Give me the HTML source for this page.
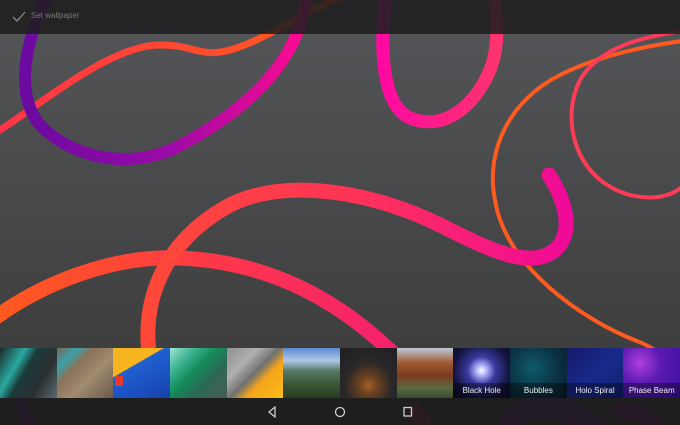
<!DOCTYPE html>
<html><head><meta charset="utf-8"><style>
html,body{margin:0;padding:0;width:680px;height:425px;overflow:hidden;background:#444;font-family:"Liberation Sans",sans-serif}
#bg{position:absolute;left:0;top:0}
.top{position:absolute;left:0;top:0;width:680px;height:34px;background:rgba(30,30,31,0.88)}
.top span{position:absolute;left:31px;top:11px;font-size:8px;color:#777}
.nav{position:absolute;left:0;top:398px;width:680px;height:27px;background:rgba(28,28,28,0.9)}
.strip{position:absolute;left:0;top:348px;width:680px;height:50px;display:flex}
.t{flex:1;height:50px;position:relative;overflow:hidden}
.t span{position:absolute;bottom:0;left:0;right:0;height:15px;line-height:15px;text-align:center;font-size:8px;color:#eee;background:rgba(0,0,0,0.35)}
</style></head><body>
<svg id="bg" width="680" height="425" viewBox="0 0 680 425">
<defs>
<linearGradient id="g" x1="0" y1="0" x2="0" y2="1"><stop offset="0" stop-color="#555659"/><stop offset="1" stop-color="#393939"/></linearGradient>
<linearGradient id="pur" x1="0" y1="0" x2="1" y2="0"><stop offset="0" stop-color="#6a0aa0"/><stop offset="0.5" stop-color="#9a0aa8"/><stop offset="1" stop-color="#ff0b90"/></linearGradient>
<linearGradient id="or" x1="0" y1="0" x2="1" y2="0"><stop offset="0" stop-color="#ff3448"/><stop offset="1" stop-color="#ff5c1a"/></linearGradient>
<linearGradient id="big" x1="0" y1="0" x2="1" y2="0"><stop offset="0" stop-color="#ff4838"/><stop offset="0.5" stop-color="#ff3358"/><stop offset="1" stop-color="#f00a98"/></linearGradient>
<linearGradient id="b2" x1="0" y1="0" x2="1" y2="0"><stop offset="0" stop-color="#ff5a1e"/><stop offset="0.5" stop-color="#ff3a45"/><stop offset="1" stop-color="#f52070"/></linearGradient>
<linearGradient id="mag" x1="0" y1="0" x2="1" y2="0"><stop offset="0" stop-color="#ff0aa0"/><stop offset="1" stop-color="#ff3370"/></linearGradient>
</defs>
<rect width="680" height="425" fill="url(#g)"/>
<g fill="none" stroke-linecap="round">
<path d="M0,130 C40,105 110,45 160,45 C195,45 200,58 230,50 C260,42 290,20 345,-5" stroke="url(#or)" stroke-width="7"/>
<path d="M48,-5 C25,40 12,100 45,130 C80,160 130,168 175,148 C230,120 300,70 306,-5" stroke="url(#pur)" stroke-width="12"/>
<path d="M386,-5 C380,40 380,105 410,118 C445,132 475,105 490,70 C500,45 497,15 494,-5" stroke="url(#mag)" stroke-width="13"/>
<path d="M690,40 C650,45 600,55 560,75 C510,100 485,150 495,200 C505,265 580,320 642,343 C660,352 675,362 690,372" stroke="#ff5a20" stroke-width="4"/>
<path d="M690,30 C650,35 600,45 580,80 C560,120 575,180 630,195 C665,203 680,190 690,180" stroke="#ff3c58" stroke-width="4"/>
<path d="M-5,318 C40,285 110,255 180,258 C270,262 340,300 400,360" stroke="url(#b2)" stroke-width="15"/>
<path d="M150,360 C140,300 165,240 230,205 C290,175 380,195 440,225 C490,250 530,270 555,250 C575,232 565,200 549,175" stroke="url(#big)" stroke-width="15"/>
<path d="M20,405 L30,430" stroke="#5a0a90" stroke-width="14"/>
<path d="M415,410 C420,415 425,425 425,430" stroke="#b0105a" stroke-width="14"/>
<path d="M510,420 C530,400 570,405 600,430" stroke="#6a0a8a" stroke-width="22"/>
<path d="M620,410 C640,410 650,420 660,430" stroke="#7a0a88" stroke-width="16"/>
</g>
</svg>
<div class="top">
<svg style="position:absolute;left:12px;top:11px" width="14" height="12" viewBox="0 0 14 12"><path d="M1,6 L5,10 L13,1" fill="none" stroke="#888" stroke-width="1.3"/></svg>
<span>Set wallpaper</span></div>
<div class="strip">
<div class="t" style="background:linear-gradient(120deg,#1a2a2a 0%,#2aa8a0 30%,#1b3a3a 45%,#2a3030 70%,#5a6a70 100%)"></div>
<div class="t" style="background:linear-gradient(135deg,#7a6a55 0%,#3aa0a8 20%,#8a7258 35%,#a08a70 60%,#6a5a48 100%)"></div>
<div class="t" style="background:linear-gradient(150deg,#f6b51e 0%,#f6b51e 35%,#2060d0 36%,#1a50c0 70%,#1840a8 100%)"><div style="position:absolute;left:2px;top:28px;width:8px;height:10px;background:#e53a2a"></div></div>
<div class="t" style="background:linear-gradient(135deg,#9ee8d0 0%,#3ab090 25%,#138a58 45%,#2a6a55 65%,#4a5a55 100%)"></div>
<div class="t" style="background:linear-gradient(135deg,#909090 0%,#b0b0b0 30%,#707070 50%,#f5a51a 65%,#fbbc1a 100%)"></div>
<div class="t" style="background:linear-gradient(180deg,#5a8ad0 0%,#b0c8e8 25%,#5a7a6a 45%,#3a5a3a 70%,#2a3a20 100%)"></div>
<div class="t" style="background:radial-gradient(circle at 50% 75%,#a06020 0%,#6a4020 20%,#2a2828 50%,#1e1e22 100%)"></div>
<div class="t" style="background:linear-gradient(180deg,#c0c8d8 0%,#a05a30 30%,#7a3a20 55%,#5a6a40 80%,#3a4a30 100%)"></div>
<div class="t" style="background:radial-gradient(circle at 50% 45%,#ffffff 0%,#b8b8ff 12%,#3a3aa0 35%,#141440 70%,#0a0a20 100%)"><span>Black Hole</span></div>
<div class="t" style="background:radial-gradient(circle at 40% 40%,#105a6a 0%,#0a3040 60%,#081a28 100%)"><span>Bubbles</span></div>
<div class="t" style="background:linear-gradient(135deg,#141a6a 0%,#1a2a8a 50%,#102070 100%)"><span>Holo Spiral</span></div>
<div class="t" style="background:radial-gradient(circle at 30% 30%,#b040e0 0%,#5a1ab0 40%,#3a10a0 100%)"><span>Phase Beam</span></div>
</div>
<div class="nav">
<svg style="position:absolute;left:267px;top:8px" width="10" height="12" viewBox="0 0 10 12"><path d="M8,1 L2,6 L8,11 Z" fill="none" stroke="#ccc" stroke-width="1.3"/></svg>
<svg style="position:absolute;left:334px;top:8px" width="12" height="12" viewBox="0 0 12 12"><circle cx="6" cy="6" r="4.5" fill="none" stroke="#ccc" stroke-width="1.3"/></svg>
<svg style="position:absolute;left:403px;top:8px" width="10" height="12" viewBox="0 0 10 12"><rect x="1" y="1.5" width="7.5" height="8.5" fill="none" stroke="#ccc" stroke-width="1.3"/></svg>
</div>
</body></html>
